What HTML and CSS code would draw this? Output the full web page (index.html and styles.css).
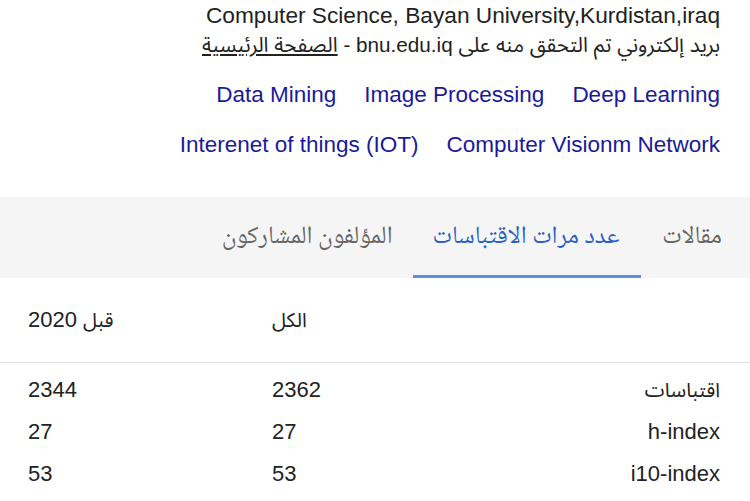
FILE: index.html
```html
<!DOCTYPE html>
<html lang="ar" dir="rtl">
<head>
<meta charset="utf-8">
<title>Profile</title>
<link rel="stylesheet" href="styles.css">
</head>
<body>
<div class="profile">
  <div class="affil" dir="ltr">Computer Science, Bayan University,Kurdistan,iraq</div>
  <div class="email">بريد إلكتروني تم التحقق منه على bnu.edu.iq - <a class="home" href="#">الصفحة الرئيسية</a></div>
  <div class="interests">
    <a href="#">Deep Learning</a>
    <a href="#">Image Processing</a>
    <a href="#">Data Mining</a>
    <a href="#">Computer Visionm Network</a>
    <a href="#">Interenet of things (IOT)</a>
  </div>
</div>
<nav class="tabs">
  <a class="tab first" href="#">مقالات</a>
  <a class="tab active" href="#">عدد مرات الاقتباسات</a>
  <a class="tab" href="#">المؤلفون المشاركون</a>
</nav>
<div class="stats">
  <div class="row head">
    <div class="cell label"></div>
    <div class="cell num"><span class="ar">الكل</span></div>
    <div class="cell num"><span class="ar">قبل</span> 2020</div>
  </div>
  <div class="body">
    <div class="row">
      <div class="cell label"><span class="ar">اقتباسات</span></div>
      <div class="cell num">2362</div>
      <div class="cell num">2344</div>
    </div>
    <div class="row">
      <div class="cell label">h-index</div>
      <div class="cell num">27</div>
      <div class="cell num">27</div>
    </div>
    <div class="row">
      <div class="cell label">i10-index</div>
      <div class="cell num">53</div>
      <div class="cell num">53</div>
    </div>
  </div>
</div>
</body>
</html>
```
FILE: styles.css
```css
html, body {
  margin: 0;
  padding: 0;
  background: #fff;
}
body {
  font-family: "Liberation Sans", Arial, "Noto Sans Arabic", "DejaVu Sans", sans-serif;
  color: #222;
  font-size: 22px;
}
.profile {
  padding: 2px 30px 0 28px;
}
.affil {
  font-size: 22.7px;
  line-height: 26px;
  text-align: right;
}
.email {
  font-size: 20.7px;
  line-height: 26px;
  margin-top: 4px;
}
.home {
  color: #222;
  text-decoration: underline;
}
.interests {
  display: flex;
  flex-wrap: wrap;
  column-gap: 28px;
  row-gap: 22px;
  margin-top: 23px;
}
.interests a {
  color: #1a1a9a;
  text-decoration: none;
  font-size: 22.5px;
  line-height: 28px;
}
.tabs {
  display: flex;
  margin-top: 38px;
  height: 81px;
  background: #f5f5f5;
  padding-right: 8px;
}
.tab {
  display: flex;
  align-items: center;
  padding: 0 20px;
  padding-top: 3px;
  font-size: 25px;
  color: #666;
  text-decoration: none;
  border-bottom: 3px solid transparent;
  font-family: "Noto Naskh Arabic", "Noto Sans Arabic", "DejaVu Sans", sans-serif;
}
.tab.first {
  padding-left: 21px;
}
.tab.active {
  color: #2962c6;
  border-bottom-color: #5a8fe6;
  padding: 3px 22px 0 20px;
}
.stats {
  padding: 0 30px 0 28px;
}
.row {
  display: grid;
  grid-template-columns: 1fr 244px 244px;
  height: 42px;
  align-items: center;
}
.row.head {
  height: 84px;
  border-bottom: 1px solid #e2e2e2;
  margin: 0 -30px 0 -28px;
  padding: 0 30px 0 28px;
}
.body {
  padding-top: 6px;
}
.cell {
  line-height: 26px;
  font-size: 22px;
}
.ar {
  font-size: 20px;
}
.label {
  text-align: right;
}
.num {
  text-align: left;
}
```
